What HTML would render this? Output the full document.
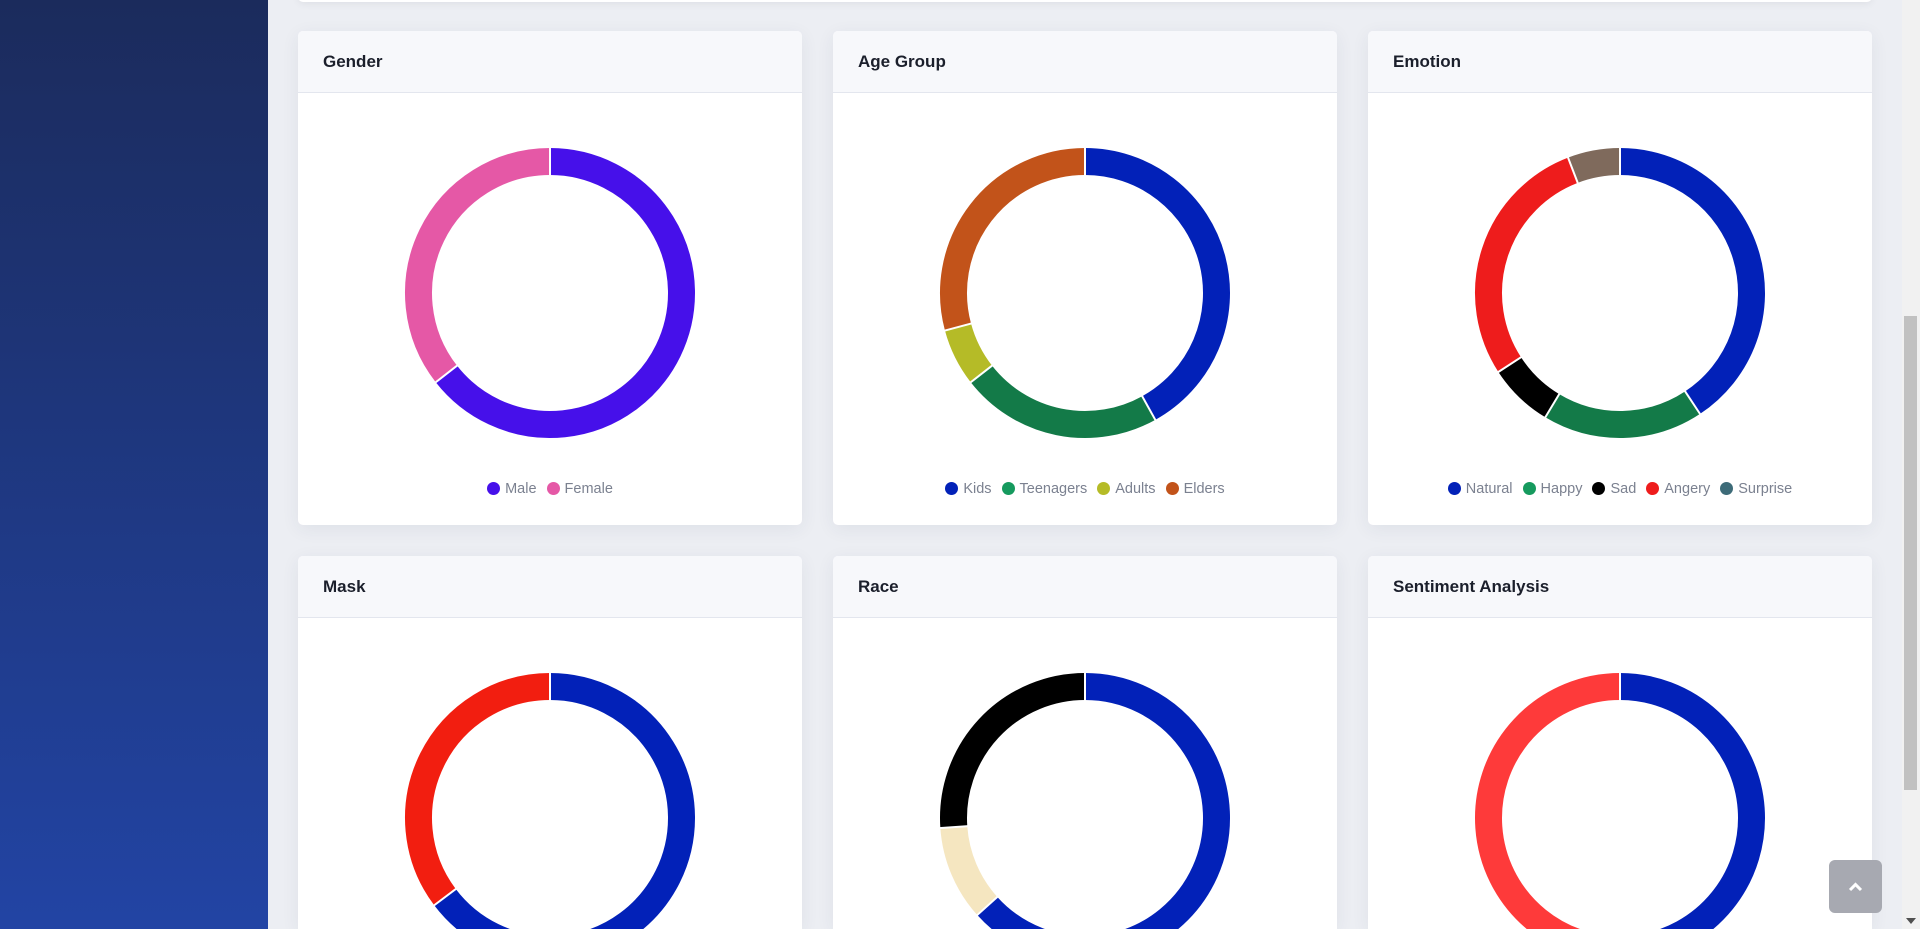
<!DOCTYPE html>
<html style="width:1920px;height:929px;overflow:hidden"><head><meta charset="utf-8"><style>
*{margin:0;padding:0;box-sizing:border-box}
body{width:1920px;height:929px;overflow:hidden;background:#eceef3;font-family:"Liberation Sans",sans-serif;position:relative}
.side{position:absolute;left:0;top:0;width:268px;height:929px;background:linear-gradient(#1b2b5c,#2244a4)}
.topbar{position:absolute;left:298px;top:-10px;width:1574px;height:12px;background:#fff;border-radius:5px;box-shadow:0 2px 8px rgba(0,0,0,.06)}
.card{position:absolute;width:504px;height:494px;background:#fff;border-radius:5px;box-shadow:0 4px 18px rgba(40,50,80,.07);overflow:hidden}
.card.b{height:373px;border-radius:5px 5px 0 0}
.hd{height:62px;background:#f7f8fb;border-bottom:1px solid #e3e6ee;padding-left:25px;line-height:62px;font-size:17px;font-weight:bold;color:#1b1f2b}
.card svg{position:absolute;left:0;top:0}
.lg{position:absolute;left:0;right:0;top:450px;text-align:center;font-size:14.5px;color:#7b8190;white-space:nowrap}
.lg span{display:inline-block;margin:0 5px}
.lg i{display:inline-block;width:13px;height:13px;border-radius:50%;vertical-align:-2px;margin-right:5px}
.sb{position:absolute;left:1902px;top:0;width:18px;height:929px;background:#f1f1f1}
.th{position:absolute;left:1904px;top:316px;width:13px;height:474px;background:#c1c1c1}
.btt{position:absolute;left:1829px;top:860px;width:53px;height:53px;background:#a7a9b1;border-radius:6px}
</style></head><body>
<div class="side"></div>
<div class="topbar"></div>

<div class="card" style="left:298px;top:31px"><div class="hd">Gender</div><svg id="c1" width="504" height="494"></svg>
<div class="lg"><span><i style="background:#4610ea"></i>Male</span><span><i style="background:#e558a6"></i>Female</span></div></div>
<div class="card" style="left:833px;top:31px"><div class="hd">Age Group</div><svg id="c2" width="504" height="494"></svg>
<div class="lg"><span><i style="background:#0221b8"></i>Kids</span><span><i style="background:#169a5e"></i>Teenagers</span><span><i style="background:#b5bb27"></i>Adults</span><span><i style="background:#c2531a"></i>Elders</span></div></div>
<div class="card" style="left:1368px;top:31px"><div class="hd">Emotion</div><svg id="c3" width="504" height="494"></svg>
<div class="lg"><span><i style="background:#0221b8"></i>Natural</span><span><i style="background:#169a5e"></i>Happy</span><span><i style="background:#000"></i>Sad</span><span><i style="background:#ee1c1c"></i>Angery</span><span><i style="background:#3d6b78"></i>Surprise</span></div></div>

<div class="card b" style="left:298px;top:556px"><div class="hd">Mask</div><svg id="c4" width="504" height="373"></svg></div>
<div class="card b" style="left:833px;top:556px"><div class="hd">Race</div><svg id="c5" width="504" height="373"></svg></div>
<div class="card b" style="left:1368px;top:556px"><div class="hd">Sentiment Analysis</div><svg id="c6" width="504" height="373"></svg></div>

<div class="sb"></div><div class="th"></div>
<svg style="position:absolute;left:1904px;top:916px" width="14" height="10"><path d="M2 2h10l-5 6z" fill="#505050"/></svg>
<div class="btt"><svg width="53" height="53"><path d="M21 30l5.5-5.5 5.5 5.5" stroke="#fff" stroke-width="3" fill="none"/></svg></div>

<script>
function ring(id,segs){
 var s=document.getElementById(id),cx=252,cy=262,r=131.5,h='',a0=0;
 function pt(a,rr){var t=(a-90)*Math.PI/180;return [cx+rr*Math.cos(t),cy+rr*Math.sin(t)];}
 segs.forEach(function(g){var a1=g[0],p=pt(a0,r),q=pt(a1,r),lg=(a1-a0)>180?1:0;
  h+='<path d="M'+p[0]+' '+p[1]+' A'+r+' '+r+' 0 '+lg+' 1 '+q[0]+' '+q[1]+'" stroke="'+g[1]+'" stroke-width="27" fill="none"/>';a0=a1;});
 a0=0;segs.forEach(function(g){var p=pt(a0,117),q=pt(a0,146);h+='<line x1="'+p[0]+'" y1="'+p[1]+'" x2="'+q[0]+'" y2="'+q[1]+'" stroke="#fff" stroke-width="2"/>';a0=g[0];});
 s.innerHTML=h;}
ring('c1',[[232,'#4610ea'],[360,'#e558a6']]);
ring('c2',[[151,'#0221b8'],[232,'#137a48'],[255,'#b5bb27'],[360,'#c2531a']]);
ring('c3',[[146.5,'#0221b8'],[211,'#137a48'],[237,'#000'],[339,'#ee1c1c'],[360,'#7f6a5c']]);
ring('c4',[[233,'#0221b8'],[360,'#f21e10']]);
ring('c5',[[228,'#0221b8'],[266,'#f5e6c0'],[360,'#000']]);
ring('c6',[[172,'#0221b8'],[360,'#fe3a3a']]);
</script>
</body></html>
